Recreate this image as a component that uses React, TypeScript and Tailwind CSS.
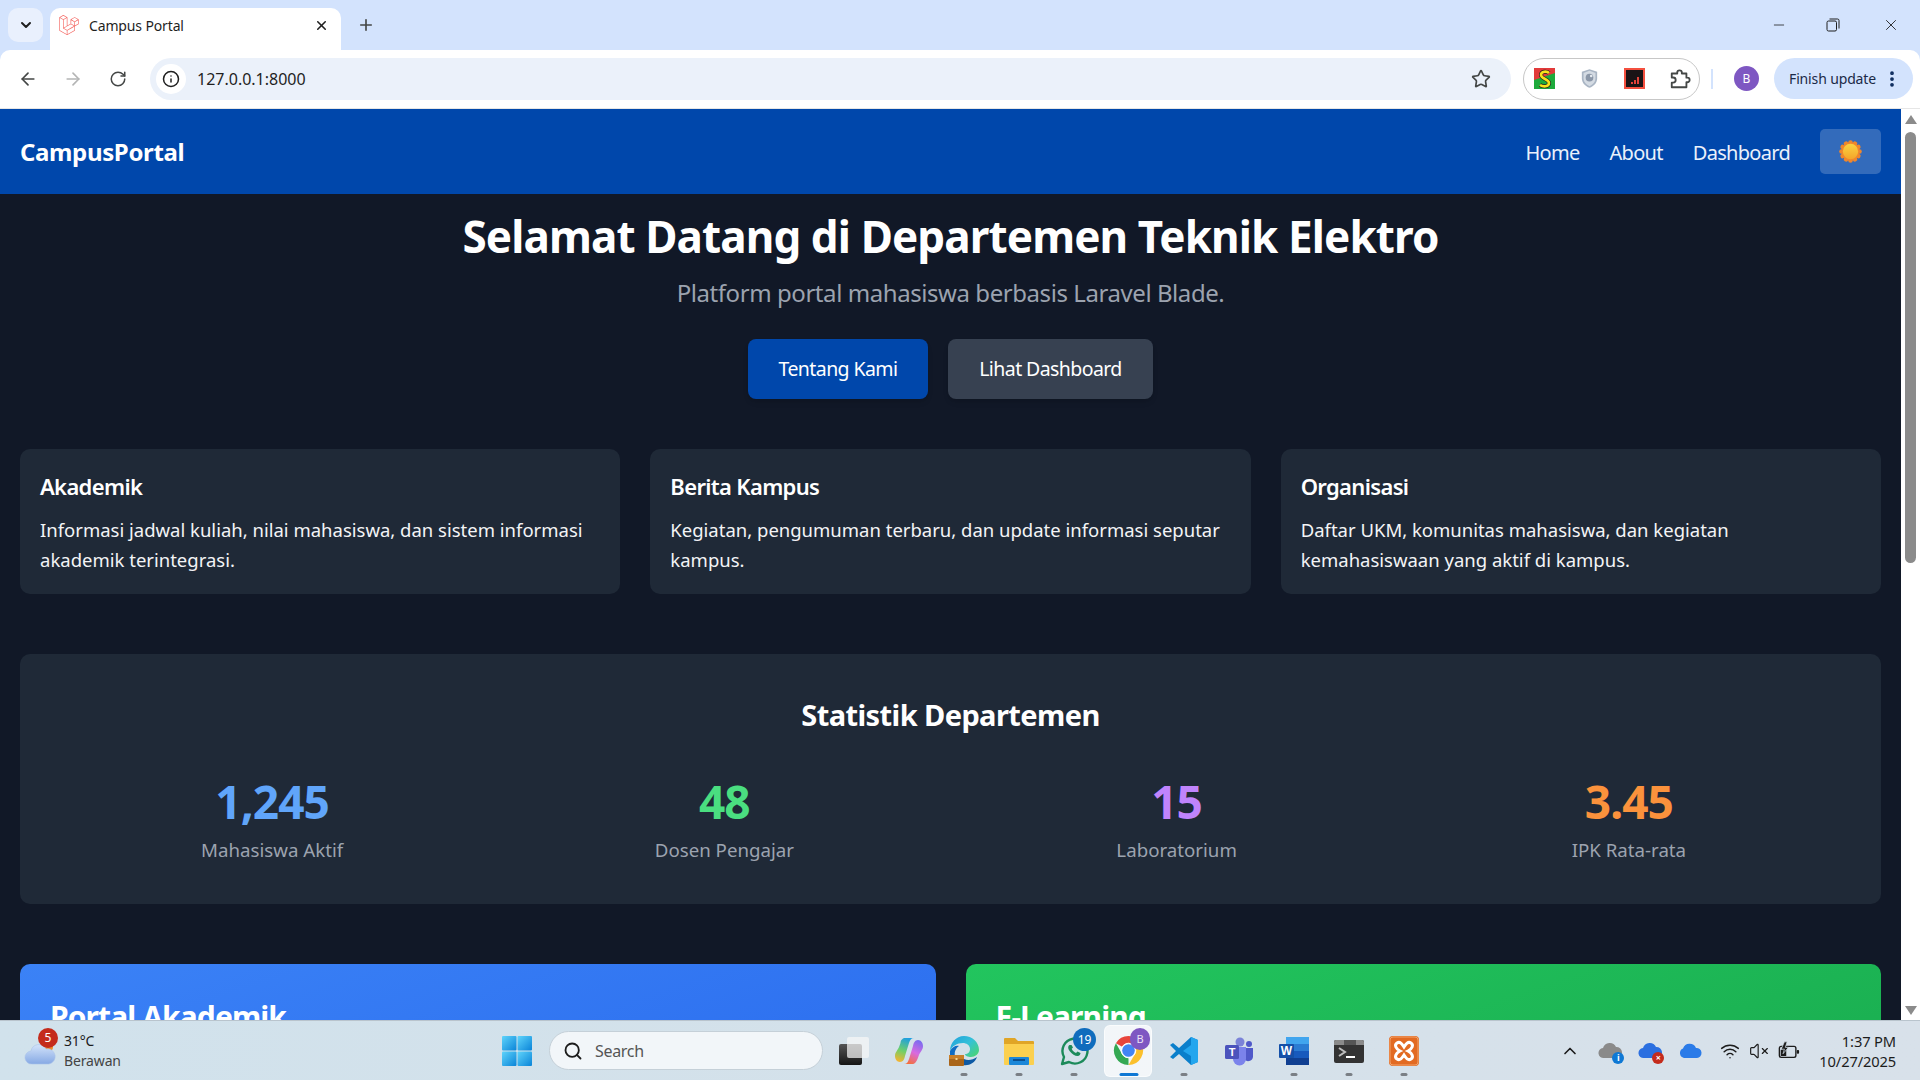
import React from 'react';
import {
  ArrowLeft, ArrowRight, ChevronDown, ChevronUp, EllipsisVertical,
  Info, Minus, Plus, RotateCw, Search, Star, VolumeX, Wifi, X,
} from 'lucide-react';
import { SiLaravel } from 'react-icons/si';

const Sun = () => (
  <svg viewBox="0 0 24 24" className="w-[23px] h-[23px]">
    <defs>
      <linearGradient id="sunFill" x1="0" y1="0" x2="0" y2="1">
        <stop offset="0%" stopColor="#fbd341" />
        <stop offset="100%" stopColor="#f4a52a" />
      </linearGradient>
    </defs>
    {[0, 30, 60, 90, 120, 150, 180, 210, 240, 270, 300, 330].map((a) => (
      <circle key={a} cx="12" cy="2.6" r="2.4" fill="#f0872c" transform={`rotate(${a} 12 12)`} />
    ))}
    <circle cx="12" cy="12" r="9.6" fill="#f0872c" />
    <circle cx="12" cy="12" r="8" fill="url(#sunFill)" />
  </svg>
);

const Ext1 = () => (
  <svg viewBox="0 0 21 21" className="w-[21px] h-[21px]">
    <rect width="21" height="21" fill="#e23a3a" />
    <path d="M0 21V12L21 5v16z" fill="#1eaa3c" />
    <path d="M15 5c-2-2-8-2-8 2s8 4 8 8-6 4-9 2" fill="none" stroke="#222" strokeWidth="4" />
    <path d="M15 5c-2-2-8-2-8 2s8 4 8 8-6 4-9 2" fill="none" stroke="#f7e21a" strokeWidth="2.6" />
  </svg>
);

const Ext2 = () => (
  <svg viewBox="0 0 20 24" className="w-[17px] h-[21px]">
    <path d="M10 1l9 3v8c0 5-4 9-9 11-5-2-9-6-9-11V4z" fill="#a9b5c4" />
    <path d="M10 3l7 2.4V12c0 4-3 7-7 9-4-2-7-5-7-9V5.4z" fill="#d4dbe3" />
    <circle cx="10" cy="11" r="4.5" fill="#8b97a8" />
    <circle cx="12" cy="9" r="1.5" fill="#e6ebf0" />
  </svg>
);

const Ext3 = () => (
  <div className="w-[21px] h-[21px] bg-[#f4503f] p-[2px]">
    <div className="w-full h-full bg-[#1a1416] flex items-end justify-center gap-px pb-[3px]">
      <span className="w-[2px] h-[2px] bg-[#e5423a]" />
      <span className="w-[2px] h-[4px] bg-[#e5423a]" />
      <span className="w-[2px] h-[7px] bg-[#e5423a]" />
    </div>
  </div>
);

const PuzzleIcon = () => (
  <svg viewBox="0 0 24 24" className="w-[22px] h-[22px]" fill="none" stroke="#444746" strokeWidth="2" strokeLinejoin="round">
    <path d="M3 6h6V5a2.5 2.5 0 015 0v1h5v4.500h1a2.500 2.500 0 010 5h-1V21H3v-5h1.500a2.800 2.800 0 000-5.600H3z" />
  </svg>
);

const WinLogo = () => (
  <svg viewBox="0 0 30 30" className="w-[30px] h-[30px]">
    <defs>
      <linearGradient id="winA" x1="0" y1="0" x2="1" y2="1">
        <stop offset="0%" stopColor="#5fd4fb" />
        <stop offset="100%" stopColor="#0a84d8" />
      </linearGradient>
    </defs>
    <rect x="0" y="0" width="14.5" height="14.5" rx="1" fill="url(#winA)" />
    <rect x="15.5" y="0" width="14.5" height="14.5" rx="1" fill="url(#winA)" />
    <rect x="0" y="15.5" width="14.5" height="14.5" rx="1" fill="url(#winA)" />
    <rect x="15.5" y="15.5" width="14.5" height="14.5" rx="1" fill="url(#winA)" />
  </svg>
);

const TaskView = () => (
  <svg viewBox="0 0 30 30" className="w-[30px] h-[30px]">
    <defs>
      <linearGradient id="tvA" x1="0" y1="0" x2="0" y2="1">
        <stop offset="0%" stopColor="#555" />
        <stop offset="100%" stopColor="#151515" />
      </linearGradient>
    </defs>
    <rect x="0" y="8" width="23" height="21" rx="2" fill="url(#tvA)" />
    <rect x="8" y="1" width="22" height="21" rx="2" fill="#f6f6f6" fillOpacity=".72" />
  </svg>
);

const Copilot = () => (
  <svg viewBox="0 0 30 30" className="w-[30px] h-[30px]">
    <defs>
      <linearGradient id="copA" x1="0.6" y1="0" x2="0.3" y2="1">
        <stop offset="0%" stopColor="#1f9fe0" />
        <stop offset="55%" stopColor="#6fd06a" />
        <stop offset="100%" stopColor="#f3b431" />
      </linearGradient>
      <linearGradient id="copB" x1="0.7" y1="0" x2="0.3" y2="1">
        <stop offset="0%" stopColor="#7a6cf0" />
        <stop offset="50%" stopColor="#d86be0" />
        <stop offset="100%" stopColor="#f4703c" />
      </linearGradient>
    </defs>
    <path d="M11 2h9c-3 0-4 2-5 5l-4 13c-.5 3-2 6-5 6s-5-3-5-6c0-4 3-6 4-9l1.500-4C6.500 4 9 2 11 2z" fill="url(#copA)" />
    <path d="M19 28h-9c3 0 4-2 5-5l4-13c.5-3 2-6 5-6s5 3 5 6c0 4-3 6-4 9l-1.500 4c-1 3-3.500 5-4.500 5z" fill="url(#copB)" />
  </svg>
);

const Edge = () => (
  <svg viewBox="0 0 30 30" className="w-[30px] h-[30px]">
    <defs>
      <linearGradient id="edgeA" x1="0" y1="0" x2="1" y2="0.8">
        <stop offset="0%" stopColor="#1f9fdc" />
        <stop offset="55%" stopColor="#35c1d8" />
        <stop offset="100%" stopColor="#49d37a" />
      </linearGradient>
    </defs>
    <path d="M1 15C1 7 7 0 15 0c8 0 15 6 15 14 0 4-4 7-8 7-3 0-6-1-6-3 3 0 5-2 5-5 0-4-4-6-7-6C8 7 3 10 1 15z" fill="url(#edgeA)" />
    <path d="M1 15c2-4 6-6 9-5-3 2-5 6-4 10H1z" fill="#0f6cc4" />
    <path d="M14 29c6 1 12-2 14-8-4 3-9 4-13 2l-1 6z" fill="#0c59a4" />
    <rect x="0" y="19" width="15" height="11" rx="1" fill="#a9651a" />
    <rect x="0" y="19" width="15" height="4" fill="#c9802a" />
    <rect x="6.500" y="22" width="2" height="2" fill="#f3d68f" />
  </svg>
);

const Files = () => (
  <svg viewBox="0 0 30 30" className="w-[30px] h-[30px]">
    <path d="M0 3a1 1 0 011-1h10l3 3h15a1 1 0 011 1v3H0z" fill="#e0a526" />
    <path d="M0 8h30v20a1 1 0 01-1 1H1a1 1 0 01-1-1z" fill="#fbd04f" />
    <rect x="5" y="21" width="20" height="8" rx="1" fill="#1b87d8" />
    <rect x="9" y="23" width="12" height="2" fill="#0a4f8f" />
  </svg>
);

const WhatsApp = () => (
  <svg viewBox="0 0 30 30" className="w-[30px] h-[30px]" fill="none">
    <path d="M3 28l2-7A12.500 12.500 0 1110 26z" stroke="#1c8a5a" strokeWidth="2.400" strokeLinejoin="round" />
    <path d="M10.500 9c-2 1.500-1.500 4 .5 6.500s5 4.500 7.500 4.500c2 0 3-1.500 3-3l-3-1.500-1.500 1.500c-2-.8-3.500-2.300-4.300-4.300l1.300-1.300L12.500 9z" fill="#1c8a5a" />
  </svg>
);

const Chrome = () => (
  <svg viewBox="0 0 32 32" className="w-[31px] h-[31px]">
    <path d="M16 1a15 15 0 0113 7.500H16a7.500 7.500 0 00-6.500 3.750L3 8.500A15 15 0 0116 1z" fill="#e8453c" />
    <path d="M29 8.500A15 15 0 0116 31l6.500-11.250a7.500 7.500 0 000-7.500H29z" fill="#fbc02d" />
    <path d="M16 31A15 15 0 013 8.500l6.500 11.250a7.500 7.500 0 006.500 3.750z" fill="#34a853" />
    <circle cx="16" cy="16" r="6.500" fill="#4285f4" />
    <circle cx="16" cy="16" r="7.500" fill="none" stroke="#fff" strokeWidth="1" />
  </svg>
);

const VsCode = () => (
  <svg viewBox="0 0 30 30" className="w-[30px] h-[30px]">
    <path d="M22 1l7 3v22l-7 3-12-11-6 5-3-2 6-6-6-6 3-2 6 5z" fill="#0a7fcb" />
    <path d="M22 1l7 3v22l-7 3V20l-8-5 8-6z" fill="#23a6ee" />
  </svg>
);

const Teams = () => (
  <svg viewBox="0 0 30 30" className="w-[30px] h-[30px]">
    <circle cx="16" cy="6" r="4.500" fill="#7b83d8" />
    <circle cx="25" cy="8" r="3" fill="#5059c9" />
    <path d="M20 12h9v9a5 5 0 01-9 2z" fill="#5059c9" />
    <path d="M9 11h13v12a6 6 0 01-13 0z" fill="#7b83eb" />
    <rect x="1" y="9" width="14" height="14" rx="1.500" fill="#4b53bc" />
    <text x="8" y="20" textAnchor="middle" fontSize="11" fontWeight="700" fill="#fff" fontFamily="Liberation Sans, sans-serif">T</text>
  </svg>
);

const Word = () => (
  <svg viewBox="0 0 30 30" className="w-[30px] h-[30px]">
    <rect x="7" y="1" width="23" height="7" fill="#41a5ee" />
    <rect x="7" y="8" width="23" height="7" fill="#2b7cd3" />
    <rect x="7" y="15" width="23" height="7" fill="#185abd" />
    <rect x="7" y="22" width="23" height="7" fill="#103f91" />
    <rect x="0" y="8" width="15" height="14" rx="1" fill="#1550a8" />
    <text x="7.500" y="19" textAnchor="middle" fontSize="12" fontWeight="700" fill="#fff" fontFamily="Liberation Sans, sans-serif">W</text>
  </svg>
);

const Terminal = () => (
  <svg viewBox="0 0 30 30" className="w-[30px] h-[30px]" fill="none">
    <rect x="0" y="4" width="30" height="23" rx="2" fill="#333" />
    <path d="M0 6a2 2 0 012-2h26a2 2 0 012 2v3H0z" fill="#8a8a8a" />
    <rect x="10" y="4" width="12" height="5" fill="#555" />
    <path d="M5 12l6 4-6 4" stroke="#bdbdbd" strokeWidth="2" />
    <path d="M12 21h9" stroke="#fff" strokeWidth="2" />
  </svg>
);

const Xampp = () => (
  <svg viewBox="0 0 30 30" className="w-[30px] h-[30px]" fill="none">
    <rect x="0" y="0" width="30" height="30" rx="4" fill="#e26a22" />
    <rect x="1" y="1" width="28" height="28" rx="3" fill="none" stroke="#f2a36a" strokeWidth="1" />
    <path d="M8 7c3-2 5 1 7 4 2-3 4-6 7-4 3 2 1 6-3 8 4 2 6 6 3 8-3 2-5-1-7-4-2 3-4 6-7 4-3-2-1-6 3-8-4-2-6-6-3-8z" stroke="#fff" strokeWidth="3" />
  </svg>
);

const WeatherCloud = () => (
  <svg viewBox="0 0 32 24" className="w-8 h-6">
    <defs>
      <linearGradient id="cloudA" x1="0" y1="0" x2="0" y2="1">
        <stop offset="0%" stopColor="#d3e3fa" />
        <stop offset="100%" stopColor="#86a9e4" />
      </linearGradient>
    </defs>
    <circle cx="25" cy="6" r="4" fill="#ef8a2a" />
    <path d="M8 23a6.500 6.500 0 01-1-13 8 8 0 0115-2 7.500 7.500 0 013 15z" fill="url(#cloudA)" stroke="#a9c3ea" strokeWidth=".6" />
  </svg>
);

const TrayCloud = ({ fill, badge, mark }: { fill: string; badge: string; mark: string }) => (
  <div className="relative w-6 h-5">
    <svg viewBox="0 0 24 18" className="w-6 h-[18px]">
      <path d="M6 17a5 5 0 01-1-10 7 7 0 0113-1 5.500 5.500 0 011 11z" fill={fill} />
    </svg>
    <span className={`absolute -right-[2px] -bottom-[3px] w-3 h-3 rounded-full text-[9px] leading-3 text-center font-bold text-white ${badge}`}>{mark}</span>
  </div>
);

const BatteryIcon = () => (
  <svg viewBox="0 0 24 20" className="w-[22px] h-[20px]" fill="none">
    <rect x="1.500" y="5" width="18" height="12" rx="2" stroke="#1c1c1c" strokeWidth="1.500" />
    <rect x="20.500" y="9" width="2.500" height="4" rx="1" fill="#1c1c1c" />
    <path d="M3 15.500V9l6-2.500v9z" fill="#1c1c1c" />
    <path d="M7 0L3.500 8h3.500l-1.500 5 6-7H8l2-6z" fill="#1c1c1c" stroke="#d5e1ea" strokeWidth=".8" />
  </svg>
);

const apps = [
  { key: 'task', el: <TaskView />, dot: false },
  { key: 'copilot', el: <Copilot />, dot: false },
  { key: 'edge', el: <Edge />, dot: true },
  { key: 'files', el: <Files />, dot: true },
  { key: 'wa', el: <WhatsApp />, dot: true, badge: '19' },
  { key: 'chrome', el: <Chrome />, dot: false, active: true },
  { key: 'code', el: <VsCode />, dot: true },
  { key: 'teams', el: <Teams />, dot: false },
  { key: 'word', el: <Word />, dot: true },
  { key: 'term', el: <Terminal />, dot: true },
  { key: 'xampp', el: <Xampp />, dot: true },
];

const features = [
  { title: 'Akademik', text: 'Informasi jadwal kuliah, nilai mahasiswa, dan sistem informasi akademik terintegrasi.' },
  { title: 'Berita Kampus', text: 'Kegiatan, pengumuman terbaru, dan update informasi seputar kampus.' },
  { title: 'Organisasi', text: 'Daftar UKM, komunitas mahasiswa, dan kegiatan kemahasiswaan yang aktif di kampus.' },
];

const stats = [
  { value: '1,245', label: 'Mahasiswa Aktif', color: 'text-[#60a5fa]' },
  { value: '48', label: 'Dosen Pengajar', color: 'text-[#4ade80]' },
  { value: '15', label: 'Laboratorium', color: 'text-[#c084fc]' },
  { value: '3.45', label: 'IPK Rata-rata', color: 'text-[#fb923c]' },
];

const BrowserChrome = () => (
  <div className="shrink-0 bg-[#d3e3fd]">
    <div className="h-[50px] flex items-end relative">
      <button className="absolute left-[8px] top-[8px] w-[35px] h-[34px] rounded-[10px] bg-[#e9f0fd] flex items-center justify-center">
        <ChevronDown className="w-4 h-4 text-[#1f1f1f]" strokeWidth={3} />
      </button>
      <div className="ml-[50px] w-[291px] h-[42px] bg-white rounded-t-[10px] flex items-center pl-[9px] pr-[12px] pb-[8px] gap-[10px]">
        <SiLaravel className="w-[20px] h-[20px] text-[#f4645f]" />
        <span className="flex-1 text-[14px] text-[#1f1f1f] font-['Noto_Sans',sans-serif] tracking-[-0.01em]">Campus Portal</span>
        <X className="w-[15px] h-[15px] text-[#1f1f1f]" strokeWidth={2.5} />
      </div>
      <Plus className="w-[18px] h-[18px] text-[#444746] ml-[16px] mb-[16px]" strokeWidth={2.2} />
      <div className="ml-auto flex items-center self-start pt-[16px] text-[#1f1f1f]">
        <Minus className="w-[16px] h-[16px] mr-[39px] mb-[8px]" strokeWidth={1.2} />
        <svg viewBox="0 0 14 14" className="w-[14px] h-[14px] mr-[42px] mb-[8px]" fill="none" stroke="#1f1f1f" strokeWidth="1">
          <rect x="1" y="3" width="9.5" height="10" rx="1.5" />
          <path d="M3.500 1h8a1.500 1.500 0 011.500 1.500v8" />
        </svg>
        <X className="w-[18px] h-[18px] mr-[20px] mb-[8px]" strokeWidth={1.2} />
      </div>
    </div>
    <div className="h-[59px] bg-white rounded-t-[10px] border-b border-[#e6e6e6] flex items-center pb-[1px] relative">
      <ArrowLeft className="w-5 h-5 ml-[18px] text-[#444746]" strokeWidth={2} />
      <ArrowRight className="w-5 h-5 ml-[25px] text-[#b4b5b5]" strokeWidth={2} />
      <RotateCw className="w-[18px] h-[18px] ml-[26px] text-[#444746]" strokeWidth={2} />
      <div className="ml-[23px] w-[1361px] h-[42px] rounded-full bg-[#ebf1fa] flex items-center pl-[6px]">
        <div className="w-[30px] h-[30px] rounded-full bg-white flex items-center justify-center">
          <Info className="w-[18px] h-[18px] text-[#1f1f1f]" strokeWidth={2} />
        </div>
        <span className="ml-[11px] text-[16px] text-[#1f1f1f] font-['Noto_Sans',sans-serif]">127.0.0.1:8000</span>
        <Star className="ml-auto mr-[20px] w-5 h-5 text-[#444746]" strokeWidth={2} />
      </div>
      <div className="ml-[12px] w-[177px] h-[42px] rounded-full border border-[#c7c7c7] flex items-center gap-[24px] pl-[10px]">
        <Ext1 />
        <div className="w-[21px] flex justify-center"><Ext2 /></div>
        <Ext3 />
        <PuzzleIcon />
      </div>
      <div className="ml-[11px] w-[2px] h-[20px] bg-[#d3e3fd]" />
      <div className="ml-[21px] w-[25px] h-[25px] rounded-full bg-[#7e57c2] text-white text-[12px] flex items-center justify-center font-['Noto_Sans',sans-serif]">B</div>
      <div className="ml-[15px] w-[139px] h-[41px] rounded-full bg-[#d3e3fd] flex items-center pl-[15px] text-[14px] text-[#1b2a47] font-['Noto_Sans',sans-serif] tracking-[-0.01em]">
        Finish update
        <EllipsisVertical className="w-5 h-5 ml-auto mr-[11px] text-[#0b2a5c]" strokeWidth={2.5} />
      </div>
    </div>
  </div>
);

const Scrollbar = () => (
  <div className="w-[19px] shrink-0 bg-white flex flex-col items-center">
    <div className="mt-[6px] w-0 h-0 border-x-[6px] border-x-transparent border-b-[9px] border-b-[#8b8b8b]" />
    <div className="mt-[8px] w-[11px] h-[431px] rounded-full bg-[#8b8b8b]" />
    <div className="mt-auto mb-[5px] w-0 h-0 border-x-[6px] border-x-transparent border-t-[9px] border-t-[#8b8b8b]" />
  </div>
);

const Page = () => (
  <div className="flex-1 min-w-0 bg-[#111827] overflow-hidden font-['Noto_Sans',sans-serif] text-white">
    <nav className="h-[85px] bg-[#0047ab] flex items-center justify-between pl-5 pr-5">
      <span className="text-[24px] font-bold tracking-[-0.015em]">CampusPortal</span>
      <div className="flex items-center">
        <a className="mt-[2px] text-[20px] tracking-[-0.035em] text-[#eaf1fb]">Home</a>
        <a className="mt-[2px] ml-[30px] text-[20px] tracking-[-0.035em] text-[#eaf1fb]">About</a>
        <a className="mt-[2px] ml-[30px] text-[20px] tracking-[-0.035em] text-[#eaf1fb]">Dashboard</a>
        <button className="ml-[30px] w-[61px] h-[45px] rounded-[5px] bg-white/20 flex items-center justify-center">
          <Sun />
        </button>
      </div>
    </nav>
    <section className="text-center pt-[12px]">
      <h1 className="text-[44px] leading-[60px] font-bold tracking-[-0.02em]">Selamat Datang di Departemen Teknik Elektro</h1>
      <p className="mt-[9px] text-[24px] leading-[36px] text-[#9ca3af] tracking-[-0.018em]">Platform portal mahasiswa berbasis Laravel Blade.</p>
      <div className="mt-[28px] flex justify-center gap-5">
        <button className="w-[180px] h-[60px] rounded-lg bg-[#0047ab] text-[19.5px] tracking-[-0.03em] shadow-md">Tentang Kami</button>
        <button className="w-[205px] h-[60px] rounded-lg bg-[#374151] text-[19.5px] tracking-[-0.03em] shadow-md">Lihat Dashboard</button>
      </div>
    </section>
    <section className="mt-[50px] px-5 grid grid-cols-3 gap-[30px]">
      {features.map((f) => (
        <div key={f.title} className="h-[145px] rounded-[10px] bg-[#1f2937] p-5">
          <h3 className="text-[22px] leading-[34px] font-semibold tracking-[-0.03em]">{f.title}</h3>
          <p className="mt-[12px] text-[18.5px] leading-[30px] text-[#f3f4f6]">{f.text}</p>
        </div>
      ))}
    </section>
    <section className="mt-[60px] mx-5 h-[250px] rounded-[10px] bg-[#1f2937] px-8 pt-[40px]">
      <h2 className="text-center text-[29px] leading-[42px] font-bold tracking-[-0.02em]">Statistik Departemen</h2>
      <div className="mt-[35px] grid grid-cols-4 gap-3 text-center">
        {stats.map((s) => (
          <div key={s.label}>
            <div className={`text-[46px] leading-[60px] font-bold tracking-[-0.02em] ${s.color}`}>{s.value}</div>
            <div className="mt-[5px] text-[18.7px] leading-[28px] text-[#9ca3af]">{s.label}</div>
          </div>
        ))}
      </div>
    </section>
    <section className="mt-[60px] mx-5 grid grid-cols-2 gap-[30px]">
      <div className="h-[300px] rounded-t-[10px] bg-gradient-to-br from-[#3b82f6] to-[#2563eb] px-[30px] pt-[33px]">
        <h3 className="text-[30px] leading-[40px] font-bold tracking-[-0.03em]">Portal Akademik</h3>
      </div>
      <div className="h-[300px] rounded-t-[10px] bg-gradient-to-br from-[#22c55e] to-[#16a34a] px-[30px] pt-[33px]">
        <h3 className="text-[30px] leading-[40px] font-bold tracking-[-0.03em]">E-Learning</h3>
      </div>
    </section>
  </div>
);

const Taskbar = () => (
  <div className="h-[60px] shrink-0 bg-gradient-to-r from-[#d1e2ec] via-[#d4e1ea] to-[#d8e1ea] border-t border-[#b9c4cd] relative flex items-center font-['Noto_Sans',sans-serif] text-[#1c1c1c]">
    <div className="relative ml-[24px] mt-[4px]">
      <WeatherCloud />
      <span className="absolute left-[14px] -top-[13px] w-[20px] h-[20px] rounded-full bg-[#c42b1c] text-white text-[12px] leading-[20px] text-center">5</span>
    </div>
    <div className="ml-[8px] text-[14px] leading-[20px] tracking-[-0.01em]">
      <div>31°C</div>
      <div className="text-[#444]">Berawan</div>
    </div>
    <div className="absolute left-[502px] top-0 h-full flex items-center">
      <WinLogo />
      <div className="ml-[17px] w-[274px] h-[39px] rounded-full bg-[#f2f6f9] border border-[#c5d0d8] flex items-center pl-[13px]">
        <Search className="w-[20px] h-[20px] text-[#1c1c1c]" strokeWidth={2.2} />
        <span className="ml-[12px] text-[16px] text-[#555] tracking-[-0.02em]">Search</span>
      </div>
      <div className="ml-[3px] flex">
        {apps.map((a) => (
          <div key={a.key} className="relative w-[55px] h-[52px] flex items-center justify-center">
            {a.active && <span className="absolute inset-y-0 left-[3px] right-[4px] rounded-md bg-white/70 border border-white/60" />}
            <span className="relative">{a.el}</span>
            {a.badge && <span className="absolute right-[5px] top-[3px] w-[23px] h-[23px] rounded-full bg-[#0f6cbd] text-white text-[12px] leading-[23px] text-center">{a.badge}</span>}
            {a.active && <span className="absolute right-[6px] top-[3px] w-[20px] h-[22px] rounded-full bg-[#7e57c2] text-[#e8e0f5] text-[11px] leading-[22px] text-center">B</span>}
            {a.dot && <span className="absolute bottom-[1px] left-1/2 -translate-x-1/2 w-[7px] h-[3px] rounded-full bg-[#7a7f85]" />}
            {a.active && <span className="absolute bottom-[1px] left-1/2 -translate-x-1/2 w-[19px] h-[3px] rounded-full bg-[#0f78d4]" />}
          </div>
        ))}
      </div>
    </div>
    <div className="ml-auto mr-[24px] flex items-center">
      <ChevronUp className="w-5 h-5 text-[#1c1c1c] mr-[18px]" strokeWidth={2} />
      <TrayCloud fill="#8a8a8a" badge="bg-[#0f78d4]" mark="i" />
      <div className="w-[16px]" />
      <TrayCloud fill="#2b6fe0" badge="bg-[#c42b1c]" mark="×" />
      <div className="w-[16px]" />
      <svg viewBox="0 0 24 16" className="w-6 h-4 mr-[18px]">
        <path d="M6 15a5 5 0 01-1-9.500A7 7 0 0118 5a5 5 0 011 10z" fill="#2b7be8" />
      </svg>
      <Wifi className="w-[20px] h-[20px] mr-[9px]" strokeWidth={1.8} />
      <VolumeX className="w-[20px] h-[20px] mr-[9px]" strokeWidth={1.4} />
      <BatteryIcon />
      <div className="ml-[19px] text-[14.7px] leading-[20px] text-right tracking-[-0.01em]">
        <div>1:37 PM</div>
        <div>10/27/2025</div>
      </div>
    </div>
  </div>
);

export default function App() {
  return (
    <div className="w-[1920px] h-screen flex flex-col overflow-hidden bg-white">
      <BrowserChrome />
      <div className="flex-1 min-h-0 flex">
        <Page />
        <Scrollbar />
      </div>
      <Taskbar />
    </div>
  );
}
